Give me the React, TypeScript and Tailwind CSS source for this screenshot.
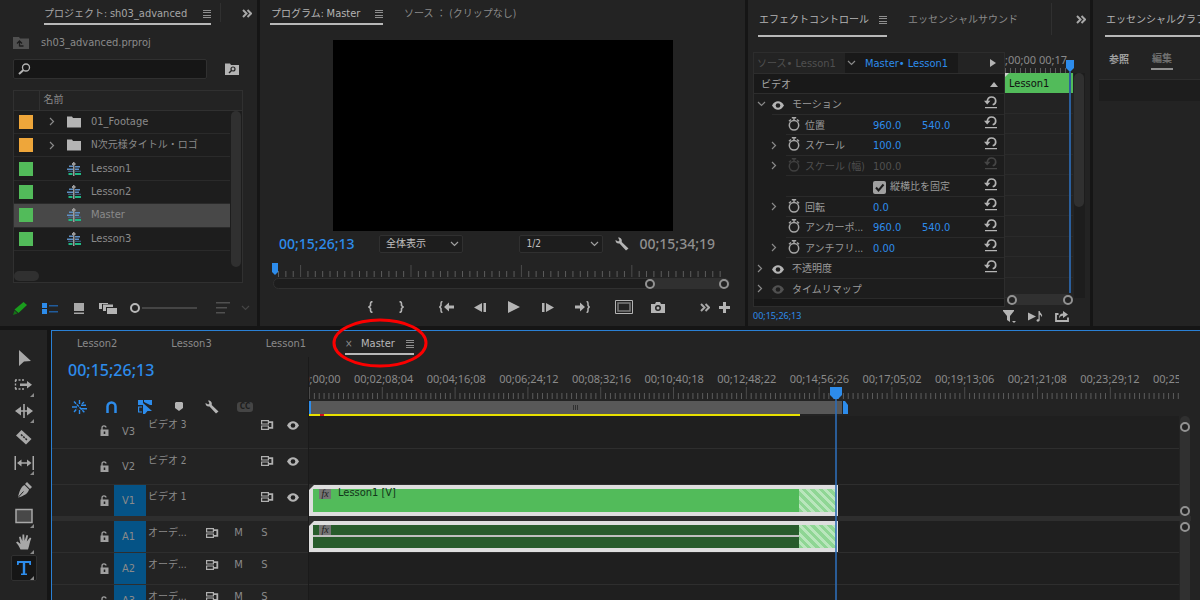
import React from 'react';
import clsx from 'clsx';

type IconProps = { w: number; h: number; className?: string; children: React.ReactNode };

function Svg({ w, h, className, children }: IconProps) {
  return (
    <svg width={w} height={h} viewBox={`0 0 ${w} ${h}`} fill="currentColor" className={clsx('shrink-0', className)} aria-hidden="true">
      {children}
    </svg>
  );
}

const stroke = { fill: 'none', stroke: 'currentColor' };

const MenuIcon = () => (
  <Svg w={8} h={10} className="text-[#8f8f8f]">
    <path d="M0 1h8v1H0zM0 3h8v1H0zM0 6h8v1H0zM0 8h8v1H0z" />
  </Svg>
);
const MoreIcon = () => (
  <Svg w={10} h={9} className="text-[#a8a8a8]">
    <path d="M1 1l3.5 3.5L1 8M5.500 1L9 4.500 5.500 8" {...stroke} strokeWidth="2" />
  </Svg>
);
const ChevronRight = () => (
  <Svg w={6} h={9} className="text-[#8a8a8a]">
    <path d="M1 1l3.500 3.500L1 8" {...stroke} strokeWidth="1.2" />
  </Svg>
);
const ChevronDown = ({ className }: { className?: string }) => (
  <Svg w={9} h={6} className={className}>
    <path d="M1 1l3.500 3.500L8 1" {...stroke} strokeWidth="1.2" />
  </Svg>
);
const FolderIcon = () => (
  <Svg w={14} h={12} className="text-[#b4b4b4]">
    <path d="M0 0.500h5l1 1.500h8v9.500H0z" />
  </Svg>
);
const SequenceIcon = () => (
  <Svg w={14} h={14}>
    <path d="M2 3.500h4v1.500H2zM8 4h5v1.500H8zM0 6.500h6V8H0zM8 6.500h4V8H8z" fill="#5f8fc4" />
    <path d="M1 8.800h5v1H1zM8 8.800h6v1H8z" fill="#436a94" />
    <path d="M1.500 11h4v2h-4zM8 11h6v2H8z" fill="#1fb783" />
    <path d="M6 0h1.500v14H6z" fill="#9b9b9b" />
    <path d="M5 1h3.500v2H5z" fill="#9b9b9b" />
  </Svg>
);
const EyeIcon = ({ className }: { className?: string }) => (
  <Svg w={12} h={9} className={className}>
    <path d="M0 4.500Q2.500 0.300 6 0.300t6 4.200Q9.500 8.700 6 8.700t-6-4.200z" />
    <circle cx="6" cy="4.500" r="2.300" fill="#1e1e1e" />
  </Svg>
);
const StopwatchIcon = ({ className }: { className?: string }) => (
  <Svg w={12} h={14} className={className}>
    <circle cx="6" cy="8.300" r="4.700" {...stroke} strokeWidth="1.500" />
    <path d="M3.800 0h4.400v1.400H3.800zM5.300 1h1.400v3H5.300zM9.500 2l2 1.800-1 1-2-1.800zM2.500 2L.5 3.800l1 1 2-1.800z" />
  </Svg>
);
const ResetIcon = ({ className }: { className?: string }) => (
  <Svg w={13} h={13} className={className}>
    <path d="M3.200 5.500C3.500 2.800 5.200 1 7.500 1 10 1 11.700 2.800 11.700 5c0 1.900-1.200 3.300-3 3.800" {...stroke} strokeWidth="1.700" />
    <path d="M0 4.800h6.400L3.200 8.500zM1 11h12v1.200H1z" />
  </Svg>
);
const WrenchIcon = () => (
  <Svg w={14} h={14} className="text-[#b4b4b4]">
    <path d="M3 0.500l1.500 2.700-1.300 1.300L.5 3C.3 5 2 7 4.500 6.500l6.500 7 2.500-2-6.800-6.500C7.500 2.500 5.500 0 3 .5z" />
  </Svg>
);
const LockIcon = () => (
  <Svg w={9} h={11} className="text-[#a0a0a0]">
    <path d="M2 5V2.800C2 .4 6 .4 6 2.600" {...stroke} strokeWidth="1.300" />
    <path fillRule="evenodd" d="M.5 4.500h8V11h-8zM3.700 6.500V9h1.600V6.500z" />
  </Svg>
);
const SyncIcon = () => (
  <Svg w={13} h={10} className="text-[#b0b0b0]">
    <path d="M.6.6h6.800v3.400H.6zM.6 6h6.800v3.400H.6z" {...stroke} strokeWidth="1.200" />
    <path d="M7.500 2.200h3.800v5.600H7.500" {...stroke} strokeWidth="1.800" />
  </Svg>
);

// Japanese labels run one size below the latin ones
function Jp({ children, className }: { children: React.ReactNode; className?: string }) {
  return <span className={clsx('text-[10px]', className)}>{children}</span>;
}

function Knob({ className }: { className?: string }) {
  return <span className={clsx('block size-[10px] shrink-0 rounded-full border-2 border-[#929292] bg-[#232323]', className)} />;
}

const bins = [
  { name: '01_Footage', folder: true },
  { name: 'N次元様タイトル・ロゴ', folder: true, jp: true },
  { name: 'Lesson1' },
  { name: 'Lesson2' },
  { name: 'Master', selected: true },
  { name: 'Lesson3' },
];

function ProjectPanel() {
  return (
    <section className="flex min-w-0 flex-col bg-[#232323] pl-[13px]">
      <div className="flex h-[25px] items-stretch">
        <button className="ml-[31px] flex items-center gap-[16px] whitespace-nowrap border-b-2 border-[#b8b8b8] pt-[4px] text-[#a6a6a6]">
          <span><Jp>プロジェクト: </Jp>sh03_advanced</span>
          <MenuIcon />
        </button>
        <span className="my-[3px] ml-[9px] w-px bg-[#303030]" />
        <button className="ml-auto mr-[5px] pt-px" aria-label="その他のパネル"><MoreIcon /></button>
      </div>
      <div className="mt-[9px] flex h-[18px] items-center gap-[12px]">
        <Svg w={16} h={12} className="text-[#505050]">
          <path d="M0 0h6l1 1.500h9V12H0z" />
          <path d="M6.500 9h4M6.500 9.500V5M4 6.500L6.500 4 9 6.500" fill="none" stroke="#1c1c1c" strokeWidth="1.300" />
        </Svg>
        <span>sh03_advanced.prproj</span>
      </div>
      <div className="mt-[7px] flex items-center">
        <div className="relative flex-1">
          <input type="text" aria-label="検索" className="block h-[20px] w-full rounded-[2px] border border-[#303030] bg-[#161616] pl-6 outline-none" />
          <Svg w={13} h={12} className="absolute left-[5px] top-[4px] text-[#b4b4b4]">
            <circle cx="8" cy="4.500" r="3.500" {...stroke} strokeWidth="1.300" />
            <path d="M5.500 7L1 11" {...stroke} strokeWidth="2" />
          </Svg>
        </div>
        <button className="ml-[18px] mr-[18px]" aria-label="ビン内を検索">
          <Svg w={14} h={12} className="text-[#b4b4b4]">
            <path d="M0 0.500h5l1 1.500h8v10H0z" />
            <path d="M4 10l2.500-2.500" stroke="#232323" strokeWidth="1.500" />
            <circle cx="8" cy="6" r="2" fill="none" stroke="#232323" strokeWidth="1.200" />
          </Svg>
        </button>
      </div>
      <div className="mr-[14px] mt-[11px] h-[193px] border border-[#303030] bg-[#1d1d1d]">
        <div className="relative">
          <table className="h-[160px] w-full table-fixed border-collapse">
            <thead>
              <tr className="h-[19px] border-b border-[#303030] bg-[#232323]">
                <th className="w-[25px] border-r border-[#303030]" aria-label="ラベル" />
                <th className="py-0 pl-[4px] text-left font-normal leading-[18px]"><Jp>名前</Jp></th>
                <th className="w-[12px]" aria-label="スクロール" />
              </tr>
            </thead>
            <tbody>
              {bins.map((bin) => (
                <tr key={bin.name}>
                  <td className={clsx('border-b border-[#2a2a2a] p-0', bin.selected && 'bg-[#484848]')}>
                    <span className={clsx('ml-[5px] block size-[14px]', bin.folder ? 'bg-[#eea63a]' : 'bg-[#52bb5a]')} />
                  </td>
                  <td className={clsx('border-b border-[#2a2a2a] p-0', bin.selected && 'bg-[#484848]')}>
                    <div className="flex items-center whitespace-nowrap leading-[18px]">
                      <span className="ml-[10px] w-[18px]">{bin.folder && <ChevronRight />}</span>
                      {bin.folder ? <FolderIcon /> : <SequenceIcon />}
                      <span className="ml-[10px]">{bin.jp ? <Jp>{bin.name}</Jp> : bin.name}</span>
                    </div>
                  </td>
                  <td />
                </tr>
              ))}
            </tbody>
          </table>
          <span className="absolute right-[1px] top-[20px] h-[156px] w-[10px] rounded-full bg-[#303030]" />
        </div>
        <span className="mt-[20px] block h-[10px] w-[25px] rounded-full bg-[#303030]" />
      </div>
      <div className="mt-[15px] flex h-[20px] items-center">
        <Svg w={14} h={13}>
          <path d="M10.500 0L14 3 5.500 11 1.500 7.500z" fill="#1a9c1d" />
          <path d="M1.500 8.500L4.500 11.500 0 13z" fill="#157217" />
        </Svg>
        <button className="ml-[15px]" aria-label="リスト表示">
          <Svg w={16} h={11}>
            <path d="M0 0h5v5H0zM0 6h5v5H0z" fill="#2d8ceb" />
            <path d="M7 2h9v1.500H7zM7 8h9v1.500H7z" fill="#215c9c" />
          </Svg>
        </button>
        <button className="ml-[16px]" aria-label="アイコン表示">
          <Svg w={10} h={11} className="text-[#a8a8a8]">
            <path d="M0 0h10v8H0zM0 9.500h10V11H0z" />
          </Svg>
        </button>
        <button className="ml-[15px]" aria-label="フリーフォーム表示">
          <Svg w={18} h={11} className="text-[#b4b4b4]">
            <path d="M8 5h10v6H8z" />
            <path d="M4 1.500h10V4H7v4H4zM0 0h9v1H3v5H0z" />
          </Svg>
        </button>
        <input
          type="range"
          defaultValue={0}
          aria-label="サムネールサイズ"
          className="ml-[13px] h-[12px] w-[67px] appearance-none bg-transparent bg-[linear-gradient(#454545,#454545)] bg-[length:55px_2px] bg-[position:100%_50%] bg-no-repeat [&::-webkit-slider-thumb]:size-[10px] [&::-webkit-slider-thumb]:appearance-none [&::-webkit-slider-thumb]:rounded-full [&::-webkit-slider-thumb]:border-2 [&::-webkit-slider-thumb]:border-solid [&::-webkit-slider-thumb]:border-[#b8b8b8] [&::-webkit-slider-thumb]:bg-[#232323]"
        />
        <button className="ml-[19px]" aria-label="並べ替え">
          <Svg w={14} h={12} className="text-[#505050]">
            <path d="M0 0h14v1.500H0zM0 5h11v1.500H0zM0 10h9v1.500H0z" />
          </Svg>
        </button>
        <ChevronDown className="ml-[11px] text-[#454545]" />
      </div>
    </section>
  );
}

// minor ticks with a taller one every 15, spread over the available width
function Ticks({ offset, span, count, className }: { offset: number; span: number; count: number; className: string }) {
  return (
    <svg className={className} width="100%" aria-hidden="true">
      {Array.from({ length: count }, (_, i) => {
        const major = (i - offset) % 15 === 0;
        return <rect key={i} x={`${(i / span) * 100}%`} y={major ? 0 : 6} width="1" height={major ? 12 : 6} fill={major ? '#4c4c4c' : '#5c5c5c'} />;
      })}
    </svg>
  );
}

function PanelSelect({ label, options, className }: { label: string; options: string[]; className: string }) {
  return (
    <div className={clsx('relative', className)}>
      <select aria-label={label} className="block h-[18px] w-full appearance-none rounded-[2px] border border-[#303030] bg-[#1d1d1d] pl-[6px] text-[10px] leading-[16px] text-[#c0c0c0]">
        {options.map((o) => <option key={o}>{o}</option>)}
      </select>
      <ChevronDown className="pointer-events-none absolute right-[4px] top-[6px] text-[#a0a0a0]" />
    </div>
  );
}

function TransportButton({ label, narrow, children }: { label: string; narrow?: boolean; children: React.ReactNode }) {
  return (
    <button aria-label={label} className={clsx('flex h-[20px] items-center justify-center text-[#b4b4b4]', narrow ? 'w-[31px]' : 'w-[34px]')}>
      {children}
    </button>
  );
}

function ProgramPanel() {
  return (
    <section className="flex min-w-0 flex-col bg-[#232323]">
      <div className="flex h-[25px] items-stretch whitespace-nowrap">
        <button className="ml-[10px] flex w-[113px] items-center justify-between border-b-2 border-[#b8b8b8] pl-[1px] pt-[4px] text-[#b4b4b4]">
          <span><Jp>プログラム: </Jp>Master</span>
          <MenuIcon />
        </button>
        <button className="ml-[21px] pt-[2px] text-[#8a8a8a]"><Jp>ソース ： (クリップなし)</Jp></button>
      </div>
      <div className="mx-auto mt-[15px] aspect-video w-[340px] bg-black" />
      <div className="mt-[2px] flex h-[22px] items-center">
        <span className="ml-[19px] w-[100px] font-['Noto_Sans'] text-[14px] font-medium leading-[22px] text-[#2d8ceb]">00;15;26;13</span>
        <PanelSelect label="ズームレベル" options={['全体表示', '50%', '100%']} className="w-[84px]" />
        <PanelSelect label="再生時の解像度" options={['1/2', '1/4', 'フル']} className="ml-auto w-[84px]" />
        <button className="ml-[12px]" aria-label="設定"><WrenchIcon /></button>
        <span className="ml-[10px] mr-[30px] font-['Noto_Sans'] text-[14px] font-medium leading-[22px] text-[#8f8f8f]">00;15;34;19</span>
      </div>
      <div className="relative ml-[18px] mr-[18px] mt-[10px]">
        <Ticks offset={3} span={61} count={61} className="block h-[12px]" />
        <Svg w={6} h={12} className="absolute -left-[6px] -top-[2px] text-[#2d8ceb]">
          <path d="M0 0h6v9l-3 3-3-3z" />
        </Svg>
      </div>
      <div className="ml-[13px] mr-[15px] mt-px flex h-[11px] rounded-full border border-[#303030] bg-[#1d1d1d]">
        <div className="ml-auto flex w-[84px] items-center justify-between rounded-full bg-[#303030]">
          <Knob className="bg-[#1d1d1d]" />
          <Knob />
        </div>
      </div>
      <div className="mb-[9px] mt-[8px] flex items-center pl-[95px]">
        <TransportButton narrow label="インをマーク">
          <Svg w={5} h={12}><path d="M4.500.6Q2.500.6 2.500 2.500v2L1 6l1.500 1.500v2q0 1.900 2 1.900" {...stroke} strokeWidth="1.600" /></Svg>
        </TransportButton>
        <TransportButton narrow label="アウトをマーク">
          <Svg w={5} h={12}><path d="M.5.6q2 0 2 1.900v2L4 6 2.500 7.500v2q0 1.900-2 1.900" {...stroke} strokeWidth="1.600" /></Svg>
        </TransportButton>
        <span className="w-[12px]" />
        <TransportButton label="インへ移動">
          <Svg w={15} h={12}>
            <path d="M3.500.6Q2 .6 2 2.500v2L.8 6 2 7.500v2q0 1.900 1.500 1.900" {...stroke} strokeWidth="1.500" />
            <path d="M5 6l5-4.500v3h5v3h-5v3z" />
          </Svg>
        </TransportButton>
        <TransportButton label="1 フレーム前へ">
          <Svg w={12} h={9}><path d="M8 0v9L0 4.500zM9.500 0H12v9H9.500z" /></Svg>
        </TransportButton>
        <TransportButton label="再生">
          <Svg w={12} h={12}><path d="M0 0l12 6-12 6z" /></Svg>
        </TransportButton>
        <TransportButton label="1 フレーム先へ">
          <Svg w={12} h={9}><path d="M4 0v9l8-4.500zM0 0h2.500v9H0z" /></Svg>
        </TransportButton>
        <TransportButton label="アウトへ移動">
          <Svg w={15} h={12}>
            <path d="M11.500.6q1.500 0 1.500 1.900v2L14.200 6 13 7.500v2q0 1.900-1.500 1.900" {...stroke} strokeWidth="1.500" />
            <path d="M10 6L5 1.500v3H0v3h5v3z" />
          </Svg>
        </TransportButton>
        <span className="w-[8px]" />
        <TransportButton label="セーフマージン">
          <Svg w={18} h={14}>
            <path d="M.5.5h17v13H.5z" {...stroke} />
            <path d="M3 3h12v8H3z" fill="none" stroke="#7d7d7d" strokeWidth="1.500" />
          </Svg>
        </TransportButton>
        <TransportButton label="フレームを書き出し">
          <Svg w={14} h={11}>
            <path fillRule="evenodd" d="M0 2h4l1-2h4l1 2h4v9H0zM7 3a3 3 0 1 0 0 6 3 3 0 1 0 0-6z" />
            <circle cx="7" cy="6" r="1.500" />
          </Svg>
        </TransportButton>
        <button className="ml-auto" aria-label="その他のボタン"><MoreIcon /></button>
        <button className="ml-[9px] mr-[15px] text-[#b4b4b4]" aria-label="ボタンエディター">
          <Svg w={11} h={11}><path d="M4 0h3v4h4v3H7v4H4V7H0V4h4z" /></Svg>
        </button>
      </div>
    </section>
  );
}

type Effect = {
  name: string;
  level: number;
  arrow?: 'right' | 'down';
  eye?: 'on' | 'off';
  values?: string[];
  disabled?: boolean;
  check?: boolean;
  noReset?: boolean;
};

const effects: Effect[] = [
  { name: 'モーション', level: 0, arrow: 'down', eye: 'on' },
  { name: '位置', level: 1, values: ['960.0', '540.0'] },
  { name: 'スケール', level: 1, arrow: 'right', values: ['100.0'] },
  { name: 'スケール (幅)', level: 1, arrow: 'right', values: ['100.0'], disabled: true },
  { name: '縦横比を固定', level: 1, check: true },
  { name: '回転', level: 1, arrow: 'right', values: ['0.0'] },
  { name: 'アンカーポ...', level: 1, values: ['960.0', '540.0'] },
  { name: 'アンチフリ...', level: 1, arrow: 'right', values: ['0.00'] },
  { name: '不透明度', level: 0, arrow: 'right', eye: 'on' },
  { name: 'タイムリマップ', level: 0, arrow: 'right', eye: 'off', noReset: true },
];

function EffectRow({ effect }: { effect: Effect }) {
  const sub = effect.level === 1;
  return (
    <div className="flex items-stretch">
      <span className={clsx('flex items-center', sub ? 'w-[32px] pl-[17px]' : 'w-[18px] pl-[3px]')}>
        {effect.arrow === 'right' && <ChevronRight />}
        {effect.arrow === 'down' && <ChevronDown className="text-[#8a8a8a]" />}
      </span>
      <div className={clsx('flex min-w-0 flex-1 items-center whitespace-nowrap border-b border-[#2a2a2a] pt-[3px]', effect.disabled ? 'text-[#505050]' : 'text-[#9a9a9a]')}>
        {effect.eye && <EyeIcon className={effect.eye === 'on' ? 'text-[#b4b4b4]' : 'text-[#505050]'} />}
        {effect.check && (
          <label className="ml-[87px] flex items-center gap-[4px]">
            <span className="relative block size-[13px]">
              <input type="checkbox" defaultChecked className="block size-[13px] appearance-none rounded-[2px] bg-[#a0a0a0]" />
              <Svg w={13} h={13} className="pointer-events-none absolute left-0 top-0 text-[#1d1d1d]">
                <path d="M3 6.500L5.500 9.500 10.500 3.500" {...stroke} strokeWidth="2" />
              </Svg>
            </span>
            <Jp>{effect.name}</Jp>
          </label>
        )}
        {sub && !effect.check && (
          <>
            <StopwatchIcon className={clsx('-mt-[4px] ml-[2px]', effect.disabled ? 'text-[#404040]' : 'text-[#a8a8a8]')} />
            <Jp className="ml-[5px] w-[68px]">{effect.name}</Jp>
            {effect.values?.map((v) => (
              <span key={v} className={clsx('w-[49px]', effect.disabled ? 'text-[#505050]' : 'text-[#2d8ceb]')}>{v}</span>
            ))}
          </>
        )}
        {effect.eye && <Jp className="ml-[8px]">{effect.name}</Jp>}
        {!effect.noReset && (
          <button className="-mt-[6px] ml-auto mr-[7px]" aria-label={`${effect.name} をリセット`}>
            <ResetIcon className={effect.disabled ? 'text-[#454545]' : 'text-[#b4b4b4]'} />
          </button>
        )}
      </div>
    </div>
  );
}

function EffectsPanel() {
  return (
    <section className="flex min-w-0 flex-col bg-[#232323]">
      <div className="flex h-[37px] items-stretch whitespace-nowrap">
        <button className="ml-[10px] flex w-[129px] items-center justify-between border-b-2 border-[#b8b8b8] pl-px pt-[4px] text-[#b4b4b4]">
          <Jp>エフェクトコントロール</Jp>
          <MenuIcon />
        </button>
        <button className="ml-[21px] pt-[2px] text-[#8a8a8a]"><Jp>エッセンシャルサウンド</Jp></button>
        <span className="mb-[2px] ml-auto mt-[3px] w-px bg-[#303030]" />
        <button className="ml-[24px] mr-[4px] pt-px" aria-label="その他のパネル"><MoreIcon /></button>
      </div>
      <div className="ml-[5px] mr-[5px] mt-[15px] flex h-[255px]">
        <div className="flex min-w-0 flex-1 flex-col border border-[#2d2d2d] bg-[#1d1d1d]">
          <div className="flex h-[20px] shrink-0 items-stretch whitespace-nowrap bg-[#232323] leading-[21px]">
            <span className="w-[91px] pl-[3px] text-[#505050]"><Jp>ソース</Jp>• Lesson1</span>
            <div className="flex w-[113px] items-center bg-[#191919] pl-[2px] text-[#2d8ceb]">
              <ChevronDown className="mr-[9px] text-[#8a8a8a]" />
              Master• Lesson1
            </div>
            <button className="ml-auto mr-[8px] text-[#b4b4b4]" aria-label="タイムラインビューの表示"><Svg w={6} h={8}><path d="M0 0l6 4-6 4z" /></Svg></button>
          </div>
          <div className="flex h-[21px] shrink-0 items-center justify-between border-y border-[#2d2d2d] bg-[#191919] pl-[7px] pr-[6px] pt-[2px]">
            <Jp className="text-[#a6a6a6]">ビデオ</Jp>
            <Svg w={8} h={5} className="text-[#b4b4b4]"><path d="M4 0l4 5H0z" /></Svg>
          </div>
          <div className="grid h-[205px] shrink-0 grid-rows-10">
            {effects.map((e) => <EffectRow key={e.name} effect={e} />)}
          </div>
          <div className="flex-1 bg-[#171717]" />
        </div>
        <div className="relative flex w-[68px] flex-col">
          <div className="flex h-[21px] flex-col justify-end overflow-hidden">
            <span className="whitespace-nowrap font-['Noto_Sans'] text-[11px] leading-[16px]">;00;00 00;17</span>
            <div className="h-[5px] shrink-0 bg-[repeating-linear-gradient(90deg,#5c5c5c_0_1px,transparent_1px_5px)]" />
          </div>
          <div className="relative h-[20px] bg-[#52bb5a] pl-[4px] leading-[21px] text-[#101010]">
            Lesson1
            <Svg w={4} h={4} className="absolute left-0 top-0 text-[#d0d0d0]"><path d="M0 0h4L0 4z" /></Svg>
          </div>
          <div className="grid h-[205px] grid-rows-10">
            {effects.map((e) => <span key={e.name} className="border-b border-[#2a2a2a]" />)}
          </div>
          <div className="absolute bottom-[2px] left-[2px] right-0 flex h-[11px] items-center justify-between rounded-full bg-[#303030]">
            <Knob /><Knob />
          </div>
          <div className="absolute bottom-[14px] right-[2px] top-[8px] w-[2px] bg-[#2b5f9c]" />
          <Svg w={8} h={11} className="absolute -right-px top-[8px] text-[#2d8ceb]"><path d="M0 0h8v8l-3 3H3L0 8z" /></Svg>
        </div>
        <div className="mb-[9px] ml-[1px] mt-[21px] w-[11px] bg-[#1d1d1d]">
          <span className="block h-[134px] w-[10px] rounded-full bg-[#303030]" />
        </div>
      </div>
      <div className="flex h-[18px] items-center pl-[5px] text-[#b4b4b4]">
        <span className="mr-auto font-['Noto_Sans'] text-[9px] text-[#2d8ceb]">00;15;26;13</span>
        <button aria-label="フィルター">
          <Svg w={13} h={13}><path d="M0 0h11v1L7 6v6l-3-2V6L0 1zM9 11h4l-2 2z" /></Svg>
        </button>
        <button className="ml-[12px]" aria-label="オーディオを再生">
          <Svg w={15} h={11}>
            <path d="M0 1.500l8 4-8 4zM10.500 0h1.200c0 2 2.500 2.500 2.500 5l-.8 1c0-1.500-.8-2-1.700-2.300V9c0 2-3.200 2.300-3.200.6 0-1.200 1.200-1.600 2-1.400z" />
          </Svg>
        </button>
        <button className="ml-[12px] mr-[21px]" aria-label="書き出し">
          <Svg w={14} h={11}><path d="M3.500 3H1v7h12V6.500" {...stroke} strokeWidth="1.800" /><path d="M4 7.500q0-5 4-5V0l5 3.500-5 3.500V4.800Q5 4.500 4 7.500z" /></Svg>
        </button>
      </div>
    </section>
  );
}

function GraphicsPanel() {
  return (
    <section className="min-w-0 overflow-hidden bg-[#232323] pl-[6px]">
      <div className="ml-[6px] flex h-[37px] items-center overflow-hidden whitespace-nowrap border-b-2 border-[#b8b8b8] pl-[1px] pt-[4px] text-[#b4b4b4]">
        <Jp>エッセンシャルグラフィックス</Jp>
      </div>
      <div className="flex h-[43px] items-start gap-[22px] border-b border-[#2d2d2d] pl-[10px] pt-[12px]">
        <button className="h-[21px] font-bold leading-[20px] text-[#a0a0a0]"><Jp>参照</Jp></button>
        <button className="h-[21px] border-b-2 border-[#8f8f8f] px-px font-bold leading-[20px] text-[#707070]"><Jp>編集</Jp></button>
      </div>
      <div className="h-[21px] bg-[#1d1d1d]" />
    </section>
  );
}

const corner = <path d="M22 20v4h-4z" fill="#8a8a8a" />;

const tools: { name: string; art: React.ReactNode }[] = [
  { name: '選択ツール', art: <path d="M7 4l12 11-7 .5L7 20z" /> },
  {
    name: 'トラックの前方選択ツール',
    art: <><path d="M3 7h10M3 16h10M3.500 7v9" {...stroke} strokeWidth="1.400" strokeDasharray="2 1.500" /><path d="M8 10.500h7V8l5 3.700-5 3.700V13H8z" />{corner}</>,
  },
  { name: 'リップルツール', art: <><path d="M11.200 5h1.600v14h-1.600zM9 7.500v3.700h6V7.500l6 4.500-6 4.500v-3.700H9v3.700L3 12z" />{corner}</> },
  { name: 'レーザーツール', art: <><path d="M9.500 5l10 9-5.500 5.500-10-9z" /><path d="M9 9.500l6 5.500" stroke="#232323" strokeWidth="1.500" strokeDasharray="2 1" /></> },
  {
    name: 'スリップツール',
    art: <><path d="M2.500 5H4v14H2.500zM20.500 5H22v14h-1.500zM9.500 8.500v2.800h5.500V8.500l4.500 3.500-4.500 3.500v-2.800H9.500v2.800L5 12z" />{corner}</>,
  },
  {
    name: 'ペンツール',
    art: <><path d="M15 4l5 5-2 2-5-5zM12.500 7l4.500 4.500c-1 4-5 6.500-11 8C7 14 9 8.500 12.500 7z" /><path d="M6 19.500l5.500-6" stroke="#232323" /></>,
  },
  { name: '長方形ツール', art: <><path d="M4 5.500h16v13H4z" fill="#484848" stroke="currentColor" strokeWidth="1.500" />{corner}</> },
  {
    name: '手のひらツール',
    art: <><path d="M8.500 19.500C7 16 5.500 14 4 12.500l1.500-1L8.500 14 7 7l1.500-.5L10.300 11 10.500 4.500h1.700l.4 6.300L14.500 5l1.600.5-1.300 6L18 7.500l1.300.8C17.500 12 17.800 15 16 19.500z" />{corner}</>,
  },
  {
    name: '横書き文字ツール',
    art: <><path d="M5 5h14v4h-1.500L17 7h-3.800v10.500H15V19H9v-1.500h1.800V7H7l-.5 2H5z" fill="#2d8ceb" />{corner}</>,
  },
];

function Toolbox() {
  return (
    <nav className="w-[47px] shrink-0 bg-[#232323] pt-[15px]">
      <div className="flex h-[236px] flex-col items-center justify-between text-[#a8a8a8]">
        {tools.map((tool, i) => (
          <button
            key={tool.name}
            aria-label={tool.name}
            className={clsx('flex h-[26px] w-[26px] items-center justify-center rounded-[2px]', i === tools.length - 1 && 'border border-[#303030] bg-[#161616]')}
          >
            <Svg w={24} h={24}>{tool.art}</Svg>
          </button>
        ))}
      </div>
    </nav>
  );
}

type Track = { id: string; name: string; height: string; on?: boolean; audio?: boolean; scrolled?: boolean; line?: boolean };

const videoTracks: Track[] = [
  { id: 'V3', name: 'ビデオ 3', height: 'h-[33px]', scrolled: true, line: true },
  { id: 'V2', name: 'ビデオ 2', height: 'h-[36px]', line: true },
  { id: 'V1', name: 'ビデオ 1', height: 'h-[31px]', on: true },
];

const audioTracks: Track[] = [
  { id: 'A1', name: 'オーデ...', height: 'h-[32px]', on: true, audio: true, line: true },
  { id: 'A2', name: 'オーデ...', height: 'h-[32px]', on: true, audio: true, line: true },
  { id: 'A3', name: 'オーデ...', height: 'h-[32px]', on: true, audio: true },
];

function TrackHeader({ track }: { track: Track }) {
  return (
    <div className={clsx('flex items-stretch overflow-hidden', track.height, track.line && 'border-b border-[#2e2e2e]')}>
      <button className={clsx('flex w-[62px] items-center justify-end pr-[5px]', track.scrolled && 'pb-[4px]')} aria-label={`${track.id} をロック`}><LockIcon /></button>
      <button className={clsx('w-[32px] pr-[3px]', track.on && 'bg-[#055386]')}>{track.id}</button>
      <div className={clsx('flex flex-1 items-start pl-[2px] leading-[16px]', track.scrolled ? 'pt-px' : 'pt-[4px]')}>
        <Jp className={clsx('whitespace-nowrap', track.audio ? 'w-[58px]' : 'w-[113px]')}>{track.name}</Jp>
        <button className="flex h-[16px] w-[14px] items-center" aria-label="同期ロック"><SyncIcon /></button>
        {track.audio ? (
          <>
            <button className="ml-[13px] w-[11px]">M</button>
            <button className="ml-[15px] w-[11px]">S</button>
          </>
        ) : (
          <button className="ml-[12px] flex h-[16px] items-center text-[#b4b4b4]" aria-label="トラック出力の切り替え"><EyeIcon /></button>
        )}
      </div>
    </div>
  );
}

function Clip({ audio }: { audio?: boolean }) {
  return (
    <div className="relative h-[31px] w-[60.8%] border-4 border-r-2 border-[#dedede] bg-[#dedede]">
      <div className="flex h-full">
        <div className={clsx('relative flex-1', audio ? 'bg-[#285c2c]' : 'bg-[#52bb5a]')}>
          {audio && <span className="absolute inset-x-0 top-[10px] h-[2px] bg-[#c0c0c0]" />}
          <span className="absolute left-[6px] top-0 flex items-center gap-[7px] leading-[10px] text-[#12351a]">
            <i className="block h-[10px] w-[12px] bg-[#757575] text-center font-['Liberation_Serif'] text-[10px] leading-[9px] text-[#1c1c1c]">fx</i>
            {!audio && <span className="-mt-[3px]">Lesson1 [V]</span>}
          </span>
        </div>
        <div className="w-[7%] bg-[repeating-linear-gradient(45deg,#8fd694_0_3px,#b9e6bc_3px_6px)]" />
      </div>
      <Svg w={5} h={5} className="absolute -left-[4px] -top-[4px] text-[#303030]"><path d="M0 0h5L0 5z" /></Svg>
    </div>
  );
}

function Lane({ track }: { track: Track }) {
  return (
    <div className={clsx(track.height, track.line && 'border-b border-[#2e2e2e]')}>
      {track.id === 'V1' && <Clip />}
      {track.id === 'A1' && <Clip audio />}
    </div>
  );
}

const timecodes = [
  '00;00;00;00', '00;02;08;04', '00;04;16;08', '00;06;24;12', '00;08;32;16', '00;10;40;18', '00;12;48;22',
  '00;14;56;26', '00;17;05;02', '00;19;13;06', '00;21;21;08', '00;23;29;12', '00;25;37;16',
];
// how many labelled divisions fit in the visible ruler
const DIVISIONS = 11.95;

function TimelinePanel() {
  return (
    <section className="flex min-w-0 flex-1 flex-col border-l border-t border-[#2a80d4] bg-[#232323]">
      <div className="flex h-[26px] shrink-0 items-start gap-[54px] pl-[25px] leading-[26px]">
        <button>Lesson2</button>
        <button>Lesson3</button>
        <button>Lesson1</button>
        <div className="relative -ml-[15px] flex h-[24px] w-[69px] items-center border-b-2 border-[#b8b8b8] pt-[3px]">
          <button className="w-[16px] text-left text-[10px]" aria-label="Master を閉じる">×</button>
          <button className="text-[#b8b8b8]">Master</button>
          <button className="ml-auto" aria-label="パネルメニュー"><MenuIcon /></button>
          <svg width="96" height="50" className="pointer-events-none absolute left-1/2 top-1/2 z-10 -translate-x-1/2 -translate-y-1/2 overflow-visible" aria-hidden="true">
            <ellipse cx="48" cy="26" rx="46" ry="23" fill="none" stroke="#fb0000" strokeWidth="3" />
          </svg>
        </div>
      </div>
      <div className="flex min-h-0 flex-1">
        <div className="w-[257px] shrink-0 border-r border-[#1a1a1a] bg-[#232323]">
          <div className="h-[59px] pl-[16px]">
            <div className="font-['Noto_Sans'] text-[16px] font-medium leading-[26px] text-[#2d8ceb]">00;15;26;13</div>
            <div className="mt-[14px] flex h-[19px] items-center text-[#2d8ceb]">
              <button className="flex w-[33px] pl-[4px]" aria-label="ネストとして挿入">
                <Svg w={15} h={14}><path d="M0 6.300h5v1.400H0zM9 4.500h5v1.400H9zM9 8h6v1.400H9zM6.800 0h1.400v4H6.800zM6.800 10h1.400v4H6.800z" /><path d="M2 1.500L13 13M2 12l3-3M10 4l2-2M4 9.500L2 12" {...stroke} strokeWidth="1.400" strokeDasharray="3 1" /></Svg>
              </button>
              <button className="flex w-[33px] pl-[5px]" aria-label="スナップ">
                <Svg w={11} h={12}><path d="M1.500 12V5.500a4 4 0 0 1 8 0V12" {...stroke} strokeWidth="2.500" /></Svg>
              </button>
              <button className="flex w-[33px] pl-[4px]" aria-label="リンクされた選択">
                <Svg w={14} h={14}><path d="M0 0h5v5H0zM6 0h8v5h-2L6 2zM5 3l9 8H9.500L7 14H5z" /><path d="M4 7H.6v5H4" {...stroke} strokeWidth="1.200" /></Svg>
              </button>
              <button className="flex w-[33px] pl-[8px] text-[#b4b4b4]" aria-label="マーカーを追加">
                <Svg w={8} h={9}><path d="M1 0h6l1 1v5L4 9 0 6V1z" /></Svg>
              </button>
              <button className="flex w-[33px] pl-[5px]" aria-label="タイムライン表示設定"><WrenchIcon /></button>
              <button className="ml-[4px] h-[10px] w-[16px] rounded-[3px] bg-[#454545] text-[8px] font-bold leading-[10px] text-[#1d1d1d]" aria-label="キャプション">CC</button>
            </div>
          </div>
          {videoTracks.map((t) => <TrackHeader key={t.id} track={t} />)}
          <div className="h-[5px] bg-[#2e2e2e]" />
          {audioTracks.map((t) => <TrackHeader key={t.id} track={t} />)}
        </div>

        <div className="relative flex min-w-0 flex-1 flex-col">
          <div className="h-[59px] shrink-0 pt-[14px]">
            <div className="flex h-[16px] overflow-hidden pl-[2px] font-['Noto_Sans'] text-[11px] leading-[15px] text-[#8a8a8a]">
              {timecodes.map((tc, i) => (
                <span
                  key={tc}
                  className="flex shrink-0 justify-center whitespace-nowrap"
                  style={{ width: `${100 / DIVISIONS}%`, marginLeft: i === 0 ? `${-50 / DIVISIONS}%` : undefined }}
                >
                  {tc}
                </span>
              ))}
            </div>
            <Ticks offset={0} span={DIVISIONS * 15} count={180} className="block h-[12px]" />
            <div className="mt-[2px] flex h-[13px]">
              <span className="w-[2px] bg-[#2d8ceb]" />
              <div className="flex w-[61%] items-center justify-center bg-[#585858]">
                <span className="h-[5px] w-[6px] bg-[repeating-linear-gradient(90deg,#303030_0_1px,transparent_1px_2px)]" />
              </div>
              <Svg w={5} h={13} className="ml-px text-[#2d8ceb]"><path d="M0 0h2l3 4v9H0z" /></Svg>
            </div>
            <div className="flex h-[2px] w-[56.4%] bg-[#e8e000]">
              <span className="ml-[11px] w-[4px] bg-[#d0101c]" />
            </div>
          </div>
          <div className="flex-1 bg-[#1f1f1f]">
            {videoTracks.map((t) => <Lane key={t.id} track={t} />)}
            <div className="h-[5px] bg-[#2e2e2e]" />
            {audioTracks.map((t) => <Lane key={t.id} track={t} />)}
          </div>
          <div className="absolute bottom-0 left-[60.6%] top-[30px] flex w-[12px] -translate-x-1/2 flex-col items-center">
            <Svg w={12} h={12} className="text-[#2d8ceb]"><path d="M0 0h12v8l-4 4H4L0 8z" /></Svg>
            <span className="w-[2px] flex-1 bg-[#2d6cb4]/80" />
          </div>
        </div>

        <div className="mr-[9px] mt-[59px] flex w-[12px] shrink-0 flex-col">
          <div className="mx-px flex h-[100px] flex-col justify-between rounded-t-full bg-[#303030] pt-[6px]">
            <Knob /><Knob />
          </div>
          <div className="h-[5px] bg-[#2e2e2e]" />
          <div className="mx-px flex-1 bg-[#303030] pt-px"><Knob /></div>
        </div>
      </div>
    </section>
  );
}

export default function App() {
  return (
    <main className="flex h-screen flex-col overflow-hidden bg-[#151515] font-['DejaVu_Sans_Condensed','Noto_Sans_CJK_JP',sans-serif] text-[11px] leading-[16px] text-[#8a8a8a]">
      <div className="grid shrink-0 grid-cols-[257fr_485fr_342fr_107fr] gap-[3px]">
        <ProjectPanel />
        <ProgramPanel />
        <EffectsPanel />
        <GraphicsPanel />
      </div>
      <div className="mt-[4px] flex min-h-0 flex-1 gap-[4px]">
        <Toolbox />
        <TimelinePanel />
      </div>
    </main>
  );
}
